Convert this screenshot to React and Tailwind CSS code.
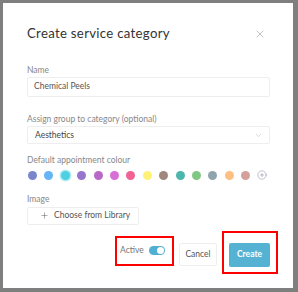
import { X, ChevronDown, Plus, CirclePlus } from 'lucide-react'

const colours = [
  '#7986cb', '#64b5f6', '#4dd0e1', '#9575cd', '#ba68c8', '#d670d6', '#f06292',
  '#fff176', '#a1887f', '#4db6ac', '#81c784', '#90a4ae', '#ffbf80', '#d4a09c',
]

export default function App() {
  return (
    <div className="w-[298px] h-[292px] bg-[#7f7f7f] pt-[3px] pl-[3px] pr-[5px] pb-[4px]" style={{ fontFamily: 'Lato, "Open Sans", sans-serif' }}>
      <div className="bg-white h-full pl-[24px] pr-[23px] pt-[21px] flex flex-col">
        <div className="flex items-center justify-between">
          <h2 className="text-[13.2px] text-[#333] tracking-[0.3px]">Create service category</h2>
          <X size={12} strokeWidth={1.2} className="text-[#999] mr-[4px]" />
        </div>

        <label className="mt-[20px] text-[8.5px] text-[#888]">Name</label>
        <div className="mt-0 h-[20px] border border-[#eee] rounded-[2px] flex items-center px-[6px] text-[8.5px] text-[#555]">Chemical Peels</div>

        <label className="mt-[16px] text-[8.5px] text-[#888]">Assign group to category (optional)</label>
        <div className="mt-[1px] h-[18px] border border-[#eee] rounded-[2px] flex items-center justify-between pl-[7px] pr-[6px] text-[8.5px] text-[#444]">
          <span>Aesthetics</span>
          <ChevronDown size={9} strokeWidth={1.2} className="text-[#aaa]" />
        </div>

        <label className="mt-[10px] text-[8.5px] text-[#888]">Default appointment colour</label>
        <div className="mt-[3px] flex items-center gap-[7.4px] pl-[1px]">
          {colours.map((c, i) => (
            <span
              key={c}
              className={i === 2 ? 'w-[9px] h-[9px] rounded-full ring-[1.5px] ring-[#b2ebf2]' : 'w-[9px] h-[9px] rounded-full'}
              style={{ backgroundColor: c }}
            />
          ))}
          <CirclePlus size={10} strokeWidth={1.3} className="text-[#8a8aa8]" />
        </div>

        <label className="mt-[13px] text-[8.5px] text-[#888]">Image</label>
        <button className="mt-[1px] self-start h-[18px] w-[112px] border border-[#eee] rounded-[2px] flex items-center gap-[5px] pl-[12px] text-[8.5px] text-[#555]">
          <Plus size={9} strokeWidth={1.3} />
          Choose from Library
        </button>

        <div className="mt-[6px] -mr-[8px] flex items-start justify-end">
          <div className="mt-[5px] w-[59px] h-[30px] border-2 border-[#ff0000] flex items-center pl-[3px] gap-[5px]">
            <span className="text-[8.5px] text-[#777]">Active</span>
            <span className="w-[16px] h-[9px] rounded-full bg-[#4fb0d3] relative">
              <span className="absolute right-[1px] top-[1px] w-[7px] h-[7px] rounded-full bg-white" />
            </span>
          </div>
          <button className="ml-[5px] mt-[12px] w-[38px] h-[23px] border border-[#eee] rounded-[2px] text-[8.5px] text-[#555]">Cancel</button>
          <div className="ml-[5px] w-[56px] h-[43px] border-2 border-[#ff0000] flex items-start pt-[10px] pl-[5px]">
            <button className="w-[41px] h-[24px] bg-[#56b2d3] rounded-[2px] text-white text-[8.5px] font-bold">Create</button>
          </div>
        </div>
      </div>
    </div>
  )
}
